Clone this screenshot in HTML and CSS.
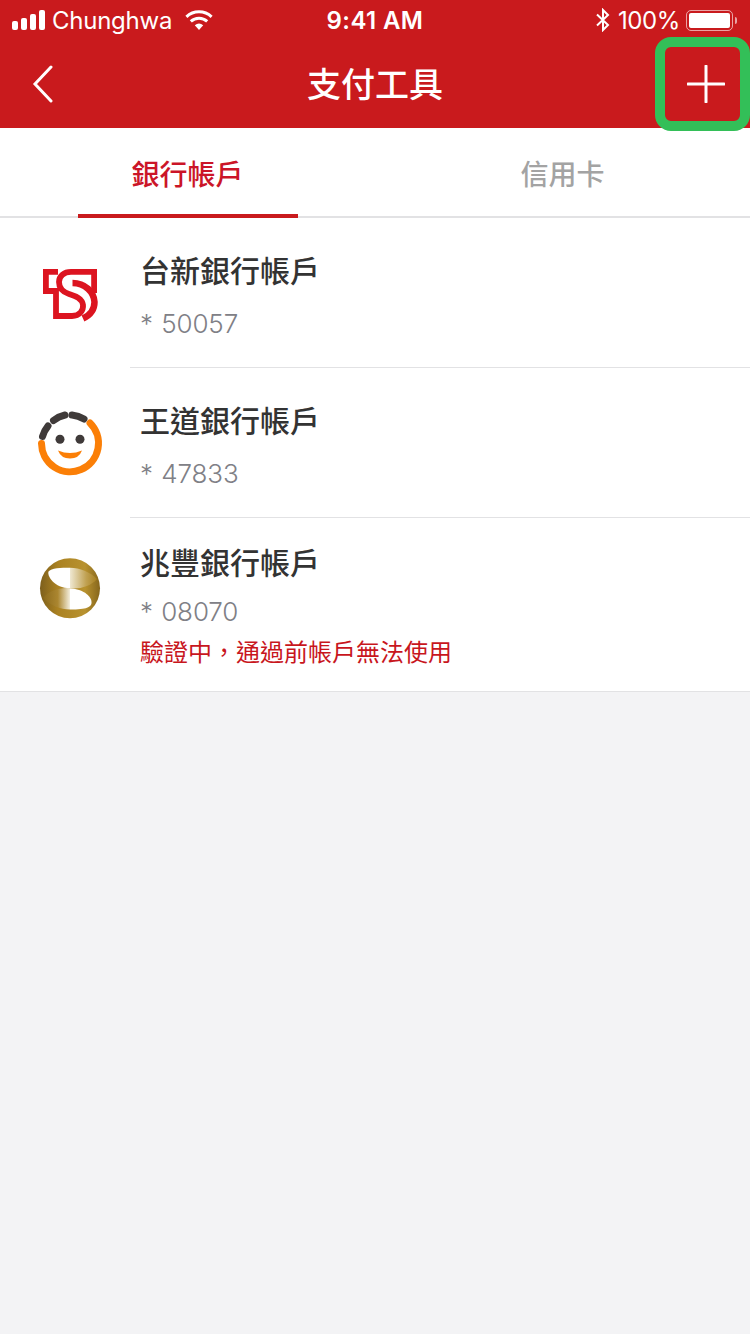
FILE: index.html
```html
<!DOCTYPE html>
<html lang="zh-Hant">
<head>
    <meta charset="UTF-8">
    <meta name="viewport" content="width=device-width, initial-scale=1.0">
    <title>支付工具</title>
    <link rel="stylesheet" href="styles.css">
</head>
<body>
    <header class="top">
        <div class="status">
            <div class="status-left">
                <span class="signal"><i></i><i></i><i></i><i></i></span>
                <span class="carrier">Chunghwa</span>
                <svg class="wifi" width="30" height="22" viewBox="0 0 30 22" aria-hidden="true">
                    <path d="M15 21 L10.800 16.200 A6.500 6.500 0 0 1 19.200 16.200 Z" fill="#fff"/>
                    <path d="M6.800 12.400 A12 12 0 0 1 23.200 12.400" fill="none" stroke="#fff" stroke-width="3"/>
                    <path d="M2.400 7.800 A18.500 18.500 0 0 1 27.600 7.800" fill="none" stroke="#fff" stroke-width="3"/>
                </svg>
            </div>
            <span class="time">9:41 AM</span>
            <div class="status-right">
                <svg class="bt" width="16" height="24" viewBox="0 0 16 24" aria-hidden="true">
                    <path d="M2 6.500 L13 17 L8 22 V2 L13 7 L2 17.500" fill="none" stroke="#fff" stroke-width="2"/>
                </svg>
                <span class="percent">100%</span>
                <span class="battery"><i></i></span>
                <span class="battery-tip"></span>
            </div>
        </div>
        <div class="nav">
            <div class="nav-side back">
                <svg width="22" height="38" viewBox="0 0 22 38" aria-hidden="true">
                    <path d="M19 2 L3 19 L19 36" fill="none" stroke="#fff" stroke-width="3" stroke-linecap="round"/>
                </svg>
            </div>
            <h1>支付工具</h1>
            <div class="nav-side add">
                <svg width="38" height="38" viewBox="0 0 38 38" aria-hidden="true">
                    <path d="M19 1 V37 M1 19 H37" fill="none" stroke="#fff" stroke-width="3" stroke-linecap="round"/>
                </svg>
            </div>
        </div>
        <div class="highlight"></div>
    </header>

    <nav class="tabs">
        <div class="tab active"><span>銀行帳戶</span></div>
        <div class="tab"><span>信用卡</span></div>
    </nav>

    <section class="list">
        <div class="row">
            <svg class="logo" width="90" height="90" viewBox="0 0 90 90" aria-hidden="true">
                <g fill="none" stroke="#dc1420">
                    <path stroke-width="5.800" d="M33 21.900 H20.900 V41 H31 V66 H47 C55 66 58.500 60 58 55 C57 48 50 46 44 44 C38 42 34 38 34 32 C34 26 39 21.900 46 21.900 H69.100 V43"/>
                    <path stroke-width="6.500" d="M47.500 33 C60 33 69 42 69.500 52 C69.500 60 65.500 65 58 68.500"/>
                </g>
            </svg>
            <div class="info">
                <div class="name">台新銀行帳戶</div>
                <div class="num">* 50057</div>
            </div>
        </div>
        <div class="row">
            <svg class="logo" width="90" height="90" viewBox="0 0 90 90" aria-hidden="true">
                <g fill="none" stroke-width="7" stroke-linecap="round">
                    <path d="M16.500 43.500 A28.500 28.500 0 1 0 65 23" stroke="#fb7f07"/>
                    <path d="M17.500 36.500 A29 29 0 0 1 23 26" stroke="#3f3a39"/>
                    <path d="M28.500 20.500 A29 29 0 0 1 40 15" stroke="#3f3a39"/>
                    <path d="M47 15 A29 29 0 0 1 59 19" stroke="#3f3a39"/>
                </g>
                <circle cx="35" cy="39.300" r="4.500" fill="#3f3a39"/>
                <circle cx="55" cy="39.300" r="4.500" fill="#3f3a39"/>
                <path d="M33 50.500 Q45 55.500 57 50.500 Q54 58.500 45 58.500 Q36 58.500 33 50.500 Z" fill="#fb7f07"/>
            </svg>
            <div class="info">
                <div class="name">王道銀行帳戶</div>
                <div class="num">* 47833</div>
            </div>
        </div>
        <div class="row last">
            <svg class="logo" width="90" height="90" viewBox="0 0 90 90" aria-hidden="true">
                <defs>
                    <linearGradient id="gold" x1="0" y1="0" x2="1" y2="0">
                        <stop offset="0" stop-color="#7d5f1c"/>
                        <stop offset="0.3" stop-color="#ab8222"/>
                        <stop offset="0.75" stop-color="#b8922f"/>
                        <stop offset="1" stop-color="#86661c"/>
                    </linearGradient>
                    <linearGradient id="fade-a" x1="0" y1="0" x2="1" y2="0">
                        <stop offset="0" stop-color="#8c6a1c"/>
                        <stop offset="0.55" stop-color="#ab8630"/>
                        <stop offset="1" stop-color="#f3eedd"/>
                    </linearGradient>
                    <linearGradient id="fade-b" x1="0" y1="0" x2="1" y2="0">
                        <stop offset="0" stop-color="#efe8d2"/>
                        <stop offset="0.6" stop-color="#c0a152"/>
                        <stop offset="1" stop-color="#a67f1f"/>
                    </linearGradient>
                </defs>
                <circle cx="45" cy="43.300" r="30" fill="url(#gold)"/>
                <path d="M45 22.700 C36 22.700 26 23 23.500 26.500 C22 31 29 43 45 43.300 Z" fill="#fff"/>
                <path d="M45 43.300 C56 44 67 50 66.500 58 C66 62 62 64.500 45 64.500 Z" fill="#fff"/>
                <path d="M45 22.700 C55 22.700 65 27 72 34 C66 41 55 44.500 45 43.300 Z" fill="url(#fade-b)"/>
                <path d="M45 64.500 C35 64.500 25 60 18 53 C24 46 35 42 45 43.300 Z" fill="url(#fade-a)"/>
            </svg>
            <div class="info">
                <div class="name">兆豐銀行帳戶</div>
                <div class="num">* 08070</div>
                <div class="warn">驗證中，通過前帳戶無法使用</div>
            </div>
        </div>
    </section>
</body>
</html>
```

FILE: styles.css
```css
body {
    margin: 0;
    background-color: #f3f3f5;
    font-family: Inter, "Noto Sans CJK TC", sans-serif;
}

.top {
    position: relative;
    height: 128px;
    background-color: #c91a1d;
    color: #fff;
}

.status {
    display: flex;
    align-items: center;
    justify-content: space-between;
    height: 40px;
    padding: 0 12px;
    font-size: 24px;
}

.status-left, .status-right {
    display: flex;
    align-items: center;
    width: 240px;
}

.status-right {
    justify-content: flex-end;
    padding-right: 1px;
    box-sizing: border-box;
}

.signal {
    display: flex;
    align-items: flex-end;
    gap: 3px;
    height: 20px;
}

.signal i {
    width: 6px;
    background-color: #fff;
    border-radius: 2px;
}

.signal i:nth-child(1) { height: 9px; }
.signal i:nth-child(2) { height: 12px; }
.signal i:nth-child(3) { height: 16px; }
.signal i:nth-child(4) { height: 20px; }

.carrier {
    margin-left: 7px;
    letter-spacing: -0.25px;
}

.wifi {
    margin-left: 12px;
}

.time {
    font-weight: 600;
    letter-spacing: 0.4px;
}

.percent {
    margin-left: 7px;
    letter-spacing: -0.4px;
}

.battery {
    display: flex;
    box-sizing: border-box;
    width: 47px;
    height: 21px;
    margin-left: 6px;
    padding: 2px;
    border: 1px solid rgba(255, 255, 255, 0.6);
    border-radius: 5px;
}

.battery i {
    flex: 1;
    background-color: #fff;
    border-radius: 2px;
}

.battery-tip {
    width: 2px;
    height: 7px;
    margin-left: 2px;
    background-color: rgba(255, 255, 255, 0.6);
    border-radius: 0 2px 2px 0;
}

.nav {
    display: grid;
    grid-template-columns: 1fr auto 1fr;
    align-items: center;
    height: 88px;
}

.nav-side {
    display: flex;
}

.nav-side.back {
    padding-left: 32px;
}

.nav-side.add {
    justify-content: flex-end;
    padding-right: 25px;
}

h1 {
    margin: 0 0 4px;
    font-size: 34px;
    font-weight: 500;
}

.highlight {
    position: absolute;
    top: 37px;
    right: 0;
    box-sizing: border-box;
    width: 95px;
    height: 94px;
    border: 10px solid #33bf58;
    border-radius: 16px;
}

.tabs {
    display: flex;
    height: 90px;
    background-color: #fff;
    border-bottom: 2px solid #e2e2e4;
    box-sizing: border-box;
}

.tab {
    flex: 1;
    display: flex;
    justify-content: center;
    font-size: 28px;
    color: #a3a3a3;
}

.tab span {
    box-sizing: border-box;
    width: 220px;
    height: 90px;
    line-height: 94px;
    text-align: center;
    font-weight: 500;
}

.tab.active {
    color: #cb1528;
}

.tab.active span {
    border-bottom: 4px solid #c91a1d;
}

.list {
    background-color: #fff;
    border-bottom: 1px solid #e2e2e4;
}

.row {
    display: flex;
    height: 150px;
    padding-left: 25px;
}

.row .logo {
    flex: none;
    margin-top: 32px;
}

.info {
    flex: 1;
    margin-left: 15px;
    padding-left: 10px;
    border-bottom: 1px solid #e2e2e4;
}

.name {
    margin-top: 30px;
    font-size: 30px;
    line-height: 46px;
    font-weight: 500;
    color: #333;
}

.num {
    margin-top: 10px;
    font-size: 26px;
    font-weight: 300;
    letter-spacing: -0.1px;
    word-spacing: 1px;
    line-height: 40px;
    color: #808086;
}

.warn {
    margin-top: 3px;
    font-size: 24px;
    line-height: 36px;
    color: #c8161d;
}

.row.last {
    height: 173px;
}

.row.last .logo {
    margin-top: 27px;
}

.row.last .info {
    border-bottom: 0;
}

.row.last .name {
    margin-top: 22px;
}

.row.last .num {
    margin-top: 6px;
}
```
